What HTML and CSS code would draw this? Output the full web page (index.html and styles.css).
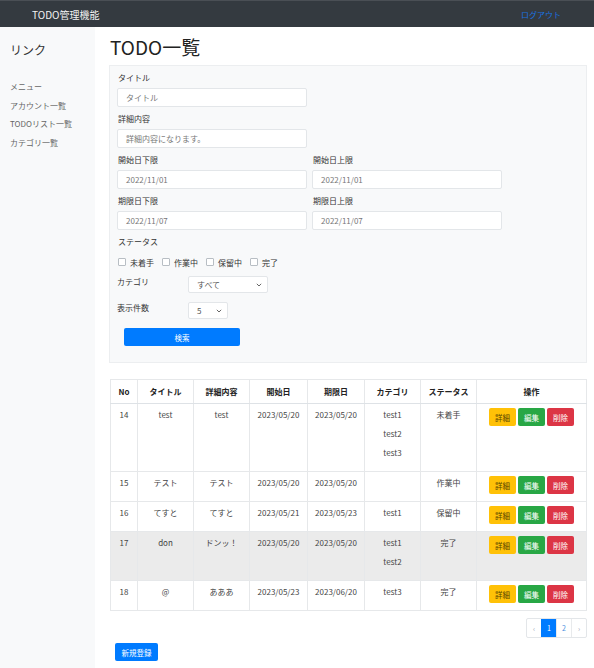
FILE: index.html
```html
<!DOCTYPE html>
<html lang="ja">
<head>
<meta charset="utf-8">
<title>TODO一覧</title>
<link rel="stylesheet" href="styles.css">
</head>
<body>
<header class="navbar">
  <span class="brand">TODO管理機能</span>
  <a class="logout">ログアウト</a>
</header>
<div class="layout">
  <aside class="sidebar">
    <div class="side-title">リンク</div>
    <ul class="side-menu">
      <li>メニュー</li>
      <li>アカウント一覧</li>
      <li>TODOリスト一覧</li>
      <li>カテゴリ一覧</li>
    </ul>
  </aside>
  <main class="main">
    <h1 class="page-title">TODO一覧</h1>
    <form class="search-card">
      <div class="group">
        <label class="lbl">タイトル</label>
        <div class="input">タイトル</div>
      </div>
      <div class="group">
        <label class="lbl">詳細内容</label>
        <div class="input">詳細内容になります。</div>
      </div>
      <div class="pair">
        <div class="group">
          <label class="lbl">開始日下限</label>
          <div class="input">2022/11/01</div>
        </div>
        <div class="group">
          <label class="lbl">開始日上限</label>
          <div class="input">2022/11/01</div>
        </div>
      </div>
      <div class="pair">
        <div class="group">
          <label class="lbl">期限日下限</label>
          <div class="input">2022/11/07</div>
        </div>
        <div class="group">
          <label class="lbl">期限日上限</label>
          <div class="input">2022/11/07</div>
        </div>
      </div>
      <div class="group">
        <label class="lbl">ステータス</label>
      </div>
      <div class="checks">
        <span class="check"><span class="box"></span>未着手</span>
        <span class="check"><span class="box"></span>作業中</span>
        <span class="check"><span class="box"></span>保留中</span>
        <span class="check"><span class="box"></span>完了</span>
      </div>
      <div class="inline-row">
        <label class="lbl inline-lbl">カテゴリ</label>
        <div class="select sel-cat">すべて<svg class="chev" width="6" height="4" viewBox="0 0 6 4"><path d="M0.8 0.8 L3 3 L5.2 0.8" fill="none" stroke="#555" stroke-width="0.9"/></svg></div>
      </div>
      <div class="inline-row">
        <label class="lbl inline-lbl">表示件数</label>
        <div class="select sel-num">5<svg class="chev" width="6" height="4" viewBox="0 0 6 4"><path d="M0.8 0.8 L3 3 L5.2 0.8" fill="none" stroke="#555" stroke-width="0.9"/></svg></div>
      </div>
      <button type="button" class="btn btn-primary btn-search">検索</button>
    </form>

    <table class="todo-table">
      <colgroup>
        <col style="width:27px"><col style="width:56px"><col style="width:56px"><col style="width:58px">
        <col style="width:57px"><col style="width:56px"><col style="width:56px"><col style="width:110px">
      </colgroup>
      <thead>
        <tr><th>No</th><th>タイトル</th><th>詳細内容</th><th>開始日</th><th>期限日</th><th>カテゴリ</th><th>ステータス</th><th>操作</th></tr>
      </thead>
      <tbody>
        <tr>
          <td><p>14</p></td><td><p>test</p></td><td><p>test</p></td><td><p>2023/05/20</p></td><td><p>2023/05/20</p></td>
          <td><p>test1</p><p>test2</p><p>test3</p></td><td><p>未着手</p></td>
          <td><div class="ops"><span class="btn btn-warn">詳細</span><span class="btn btn-green">編集</span><span class="btn btn-red">削除</span></div></td>
        </tr>
        <tr>
          <td><p>15</p></td><td><p>テスト</p></td><td><p>テスト</p></td><td><p>2023/05/20</p></td><td><p>2023/05/20</p></td>
          <td></td><td><p>作業中</p></td>
          <td><div class="ops"><span class="btn btn-warn">詳細</span><span class="btn btn-green">編集</span><span class="btn btn-red">削除</span></div></td>
        </tr>
        <tr>
          <td><p>16</p></td><td><p>てすと</p></td><td><p>てすと</p></td><td><p>2023/05/21</p></td><td><p>2023/05/23</p></td>
          <td><p>test1</p></td><td><p>保留中</p></td>
          <td><div class="ops"><span class="btn btn-warn">詳細</span><span class="btn btn-green">編集</span><span class="btn btn-red">削除</span></div></td>
        </tr>
        <tr class="hover">
          <td><p>17</p></td><td><p>don</p></td><td><p>ドンッ！</p></td><td><p>2023/05/20</p></td><td><p>2023/05/20</p></td>
          <td><p>test1</p><p>test2</p></td><td><p>完了</p></td>
          <td><div class="ops"><span class="btn btn-warn">詳細</span><span class="btn btn-green">編集</span><span class="btn btn-red">削除</span></div></td>
        </tr>
        <tr>
          <td><p>18</p></td><td><p>@</p></td><td><p>あああ</p></td><td><p>2023/05/23</p></td><td><p>2023/06/20</p></td>
          <td><p>test3</p></td><td><p>完了</p></td>
          <td><div class="ops"><span class="btn btn-warn">詳細</span><span class="btn btn-green">編集</span><span class="btn btn-red">削除</span></div></td>
        </tr>
      </tbody>
    </table>

    <div class="pager-row">
      <ul class="pager">
        <li class="pg pg-arrow">‹</li>
        <li class="pg active">1</li>
        <li class="pg">2</li>
        <li class="pg pg-arrow">›</li>
      </ul>
    </div>
    <div class="new-row">
      <span class="btn btn-primary btn-new">新規登録</span>
    </div>
  </main>
</div>
</body>
</html>
```

FILE: styles.css
```css
* { box-sizing: border-box; }
html, body { margin: 0; padding: 0; }
body {
  font-family: "Noto Sans CJK JP", "Noto Sans", sans-serif;
  font-size: 8px;
  color: #333;
  background: #fff;
  width: 594px;
  min-height: 668px;
}

.navbar {
  height: 27px;
  background: #343a40;
  border-top: 1px solid #4a4f55;
  display: flex;
  align-items: center;
  justify-content: space-between;
  padding: 0 33px 0 32px;
}
.brand { color: #f2f2f2; font-size: 10px; }
.logout { color: #1a73e0; font-size: 8px; }

.layout { display: flex; min-height: 641px; }
.sidebar {
  width: 95px;
  background: #f8f9fa;
  padding: 15px 0 0 10px;
}
.side-title { font-size: 12px; line-height: 16px; color: #333; }
.side-menu { list-style: none; margin: 20px 0 0; padding: 0; }
.side-menu li { line-height: 18.7px; color: #666; font-size: 8px; }

.main { flex: 1; padding: 8px 7px 0 14px; }
.page-title {
  margin: 0 0 7px 1px;
  font-size: 19px;
  line-height: 23px;
  font-weight: 400;
  color: #222;
}

.search-card {
  background: #f8f9fa;
  border: 1px solid #eceef0;
  padding: 6px 8px 16px 7px;
  display: flex;
  flex-direction: column;
}
.group { display: flex; flex-direction: column; margin-bottom: 6px; }
.lbl { line-height: 12px; margin: 0 0 4px 1px; color: #333; }
.input {
  width: 190px;
  height: 19px;
  background: #fff;
  border: 1px solid #e3e6e9;
  border-radius: 2px;
  padding-left: 8px;
  line-height: 17px;
  color: #777;
  font-size: 8px;
}
.pair { display: flex; gap: 5px; }
.pair .group { margin-bottom: 6px; }

.checks { display: flex; align-items: center; height: 12px; margin: -2px 0 8px 1px; }
.check { display: inline-flex; align-items: center; margin-right: 8px; color: #333; }
.box {
  width: 8px; height: 8px;
  border: 1px solid #b8bec4;
  border-radius: 1px;
  background: #fff;
  margin-right: 4px;
}

.inline-row { display: flex; align-items: flex-start; margin-bottom: 9px; }
.inline-lbl { width: 71px; margin: 0; line-height: 12px; }
.select {
  height: 17px;
  background: #fff;
  border: 1px solid #e3e6e9;
  border-radius: 2px;
  padding-left: 8px;
  line-height: 15px;
  color: #555;
  display: flex;
  justify-content: space-between;
  align-items: center;
  padding-right: 5px;
}
.sel-cat { width: 80px; }
.sel-num { width: 40px; }
.chev { display: block; }

.btn {
  display: inline-flex;
  align-items: center;
  justify-content: center;
  border: none;
  border-radius: 2px;
  font-family: inherit;
  font-size: 7.5px;
  color: #fff;
  padding: 0;
}
.btn-primary { background: #007bff; }
.btn-search { width: 116px; height: 18px; margin: 0 0 0 7px; }

.todo-table {
  margin-top: 16px;
  width: 476px;
  border-collapse: collapse;
  table-layout: fixed;
  margin-left: 1px;
}
.todo-table th, .todo-table td {
  border: 1px solid #e6e8ea;
  text-align: center;
  vertical-align: top;
}
.todo-table th {
  height: 24px;
  vertical-align: middle;
  font-weight: 700;
  color: #222;
  border-bottom: 1px solid #dee2e6;
}
.todo-table td { padding: 4px 2px 6px; color: #444; }
.todo-table p { margin: 0 0 5px; line-height: 14px; }
.todo-table tr.hover td { background: #ebebeb; }
.ops { display: flex; justify-content: center; gap: 2px; }
.ops .btn { width: 27px; height: 18px; }
.btn-warn { background: #ffc107; color: #5a4500; }
.btn-green { background: #28a745; }
.btn-red { background: #dc3545; }

.pager-row { display: flex; justify-content: flex-end; margin-top: 7px; }
.pager { display: flex; list-style: none; margin: 0; padding: 0; border: 1px solid #e3e6e9; border-radius: 2px; }
.pg {
  width: 15px; height: 18px;
  display: flex; align-items: center; justify-content: center;
  color: #4d8fe0; font-size: 7px;
  border-left: 1px solid #e8eaec;
}
.pg:first-child { border-left: none; width: 14px; }
.pg-arrow { color: #9aa6b4; }
.pg.active { background: #007bff; color: #fff; border-left-color: #007bff; }

.new-row { margin-top: 5px; padding-left: 6px; }
.btn-new { width: 43px; height: 18px; }
```
